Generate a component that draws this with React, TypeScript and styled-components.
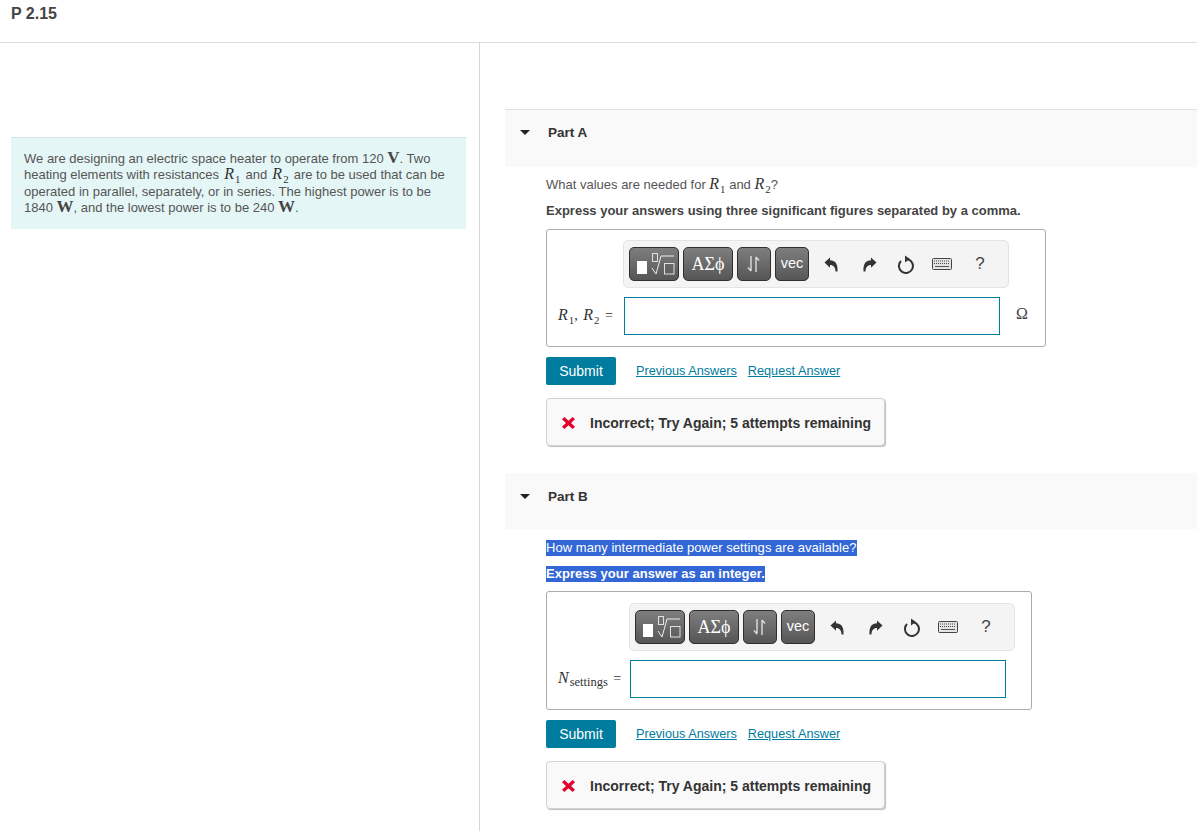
import React from 'react';
import styled, { createGlobalStyle } from 'styled-components';

const GlobalStyle = createGlobalStyle`
  html, body {
    margin: 0;
    height: 100%;
    overflow: hidden;
    background: #ffffff;
  }
  body {
    font-family: 'Liberation Sans', Arial, sans-serif;
    color: #444444;
  }
`

const MathVar = styled.span`
  font-family: 'Liberation Serif', serif;
  font-style: italic;
  font-size: 16px;
  line-height: 0;
  color: #333333;
`
const MathUnit = styled.span`
  font-family: 'Liberation Serif', serif;
  font-weight: 700;
  font-size: 17px;
  line-height: 0;
  color: #444444;
`
const MathSub = styled.sub<{ $long?: boolean }>`
  font-family: 'Liberation Serif', serif;
  font-style: normal;
  font-size: ${p => (p.$long ? '0.78em' : '0.68em')};
  line-height: 0;
  margin-left: 1px;
  vertical-align: ${p => (p.$long ? '-3px' : 'sub')};
`
const Page = styled.div`
  display: flex;
  flex-direction: column;
  height: 831px;
`
const Header = styled.header`
  height: 37px;
  border-bottom: 1px solid #dcdcdc;
  padding: 5px 11px 0;
  font-size: 16px;
  line-height: 17px;
  font-weight: 700;
  color: #444444;
`
const Columns = styled.div`
  flex: 1;
  display: flex;
  min-height: 0;
`
const LeftColumn = styled.aside`
  width: 479px;
  flex: none;
  border-right: 1px solid #d6d6d6;
  padding-top: 94px;
`
const InfoBox = styled.div`
  margin: 0 13px 0 11px;
  height: 92px;
  box-sizing: border-box;
  padding: 13px 13px 0;
  background: #e5f6f6;
  border-top: 1px solid #d3e4e6;
  font-size: 13px;
  line-height: 16.3px;
  color: #555555;
  & ${MathVar} {
    margin: 0 1.5px;
  }
`
const RightColumn = styled.main`
  flex: 1;
  padding: 66px 0 0 25px;
  min-width: 0;
`
const PartHeader = styled.div<{ $height: number; $ruled?: boolean }>`
  height: ${p => p.$height}px;
  box-sizing: border-box;
  display: flex;
  align-items: flex-start;
  background: #f9f9f9;
  border-top: 1px solid ${p => (p.$ruled ? '#e0e0e0' : '#f9f9f9')};
  padding: 15px 0 0 15px;
  font-size: 13.5px;
  line-height: 16px;
  font-weight: 700;
  color: #333333;
`
const Caret = styled.span`
  width: 0;
  height: 0;
  margin: 5px 18px 0 0;
  border-left: 5px solid transparent;
  border-right: 5px solid transparent;
  border-top: 5px solid #222222;
`
const PartBody = styled.section<{ $top: number; $bottom: number }>`
  padding: ${p => p.$top}px 0 ${p => p.$bottom}px 41px;
`
const Question = styled.p`
  margin: 0;
  height: 16px;
  font-size: 13px;
  line-height: 16px;
  color: #555555;
`
const Instruction = styled.p`
  margin: 10px 0 0;
  height: 16px;
  font-size: 13px;
  line-height: 16px;
  font-weight: 700;
  color: #444444;
`
const Selected = styled.span`
  display: inline-block;
  background: #3367d6;
  color: #ffffff;
  letter-spacing: 0.04px;
`
const AnswerBox = styled.div<{ $width: number; $top: number; $pad: number }>`
  width: ${p => p.$width}px;
  margin-top: ${p => p.$top}px;
  box-sizing: border-box;
  border: 1px solid #ababab;
  border-radius: 3px;
  padding: ${p => p.$pad}px 11px 11px;
`
const Toolbar = styled.div<{ $offset: number }>`
  width: 386px;
  height: 48px;
  box-sizing: border-box;
  margin-left: ${p => p.$offset}px;
  padding: 6px 5px;
  display: flex;
  align-items: center;
  gap: 4px;
  background: #f4f4f4;
  border: 1px solid #e4e4e4;
  border-radius: 5px;
`
const ToolButton = styled.button<{ $width: number; $serif?: boolean }>`
  width: ${p => p.$width}px;
  height: 34px;
  flex: none;
  padding: 0 0 ${p => (p.$serif ? 0 : 2)}px;
  display: flex;
  align-items: center;
  justify-content: center;
  color: #ffffff;
  background: linear-gradient(#7e7e7e, #565656);
  border: 1px solid #2f2f2f;
  border-radius: 5px;
  font-family: ${p => (p.$serif ? "'Liberation Serif', 'DejaVu Serif', serif" : "'Liberation Sans', sans-serif")};
  font-size: ${p => (p.$serif ? 18 : 14.5)}px;
`
const ToolIcons = styled.div`
  flex: 1;
  display: grid;
  grid-template-columns: 38px 38px 36px 36px 40px;
  margin-left: -1px;
`
const ToolIcon = styled.span`
  display: flex;
  align-items: center;
  justify-content: center;
  height: 34px;
  font-size: 17px;
  color: #444444;
`
const AnswerRow = styled.div<{ $label: number }>`
  display: grid;
  grid-template-columns: ${p => p.$label}px 376px auto;
  align-items: center;
  margin-top: 9px;
`
const Label = styled.span`
  font-family: 'Liberation Serif', serif;
  font-size: 14px;
  word-spacing: 2px;
  color: #333333;
  white-space: nowrap;
`
const Input = styled.input`
  height: 38px;
  width: 376px;
  box-sizing: border-box;
  padding: 0;
  background: #ffffff;
  border: 1px solid #007c9e;
  border-radius: 0;
  outline: none;
`
const Unit = styled.span`
  margin-left: 16px;
  margin-top: -5px;
  font-family: 'Liberation Serif', serif;
  font-size: 16px;
  color: #444444;
`
const ActionRow = styled.div`
  display: flex;
  align-items: center;
  margin-top: 10px;
  height: 28px;
`
const SubmitButton = styled.button`
  width: 70px;
  height: 28px;
  padding: 0;
  margin-right: 20px;
  background: #007c9e;
  color: #ffffff;
  border: none;
  border-radius: 2px;
  font-family: 'Liberation Sans', sans-serif;
  font-size: 14px;
`
const ActionLink = styled.a`
  margin: 0 11px 0 0;
  font-size: 12.7px;
  color: #007c9e;
  text-decoration: underline;
`
const Feedback = styled.div`
  width: 339px;
  height: 48px;
  margin-top: 13px;
  box-sizing: border-box;
  display: flex;
  align-items: center;
  padding: 2px 0 0 14px;
  background: #f9f9f9;
  border: 1px solid #d2d2d2;
  border-radius: 4px;
  box-shadow: 1px 1px 1px #bdbdbd;
  font-size: 14px;
  font-weight: 700;
  color: #333333;
`
const CrossIcon = styled.svg`
  width: 15px;
  height: 14px;
  margin-right: 14px;
  flex: none;
`

const Indexed = ({ name, sub }: { name: string; sub: string }) => (
  <MathVar>{name}<MathSub $long={sub.length > 1}>{sub}</MathSub></MathVar>
)

const RootIcon = () => (
  <svg width="48" height="32" viewBox="0 0 48 32" fill="none">
    <rect x="7" y="13" width="10" height="13" fill="#ffffff" />
    <rect x="22.5" y="5.5" width="5" height="8" stroke="#e0e0e0" />
    <path d="M22 20l4 6 5 -18h13" stroke="#eeeeee" />
    <rect x="34.5" y="15.5" width="9.5" height="10.5" stroke="#e0e0e0" />
  </svg>
)
const SwapIcon = () => (
  <svg width="16" height="18" viewBox="0 0 16 18" fill="none" stroke="#dddddd" strokeWidth="1.4">
    <path d="M5 1v15M2 12.5l3 3.5" />
    <path d="M10 17V2M13 5.5L10 2" />
  </svg>
)
const UndoIcon = ({ flip }: { flip?: boolean }) => (
  <svg width="15" height="15" viewBox="0 0 15 15" style={flip ? { transform: 'scaleX(-1)' } : undefined}>
    <path d="M0.5 5.5L6 0.5V3.3C11 3.3 14 6.5 13.5 14.5H11.5C11.5 10.5 9.5 8 6 8V10.8Z" fill="#333333" />
  </svg>
)
const ResetIcon = () => (
  <svg width="18" height="20" viewBox="0 0 18 20" fill="none">
    <path d="M11 5.3A7 7 0 1 1 4 7" stroke="#333333" strokeWidth="2" />
    <path d="M8 1.5L13 5 8 8.5Z" fill="#333333" />
  </svg>
)
const KeyboardIcon = () => (
  <svg width="20" height="12" viewBox="0 0 20 12" fill="none">
    <rect x="0.5" y="0.5" width="19" height="11" rx="1" fill="#e4e4e4" stroke="#444444" />
    <path d="M2 3h16M2 5.5h16" stroke="#444444" strokeDasharray="1 1" />
    <path d="M3 8.5h14" stroke="#555555" />
  </svg>
)

const AnswerPanel = ({ width, label, offset, top, pad, unit, children }: {
  width: number; label: number; offset: number; top: number; pad: number; unit?: string; children: React.ReactNode;
}) => (
  <AnswerBox $width={width} $top={top} $pad={pad}>
    <Toolbar $offset={offset}>
      <ToolButton $width={50} $serif><RootIcon /></ToolButton>
      <ToolButton $width={50} $serif>ΑΣϕ</ToolButton>
      <ToolButton $width={34} $serif><SwapIcon /></ToolButton>
      <ToolButton $width={34}>vec</ToolButton>
      <ToolIcons>
        <ToolIcon><UndoIcon /></ToolIcon>
        <ToolIcon><UndoIcon flip /></ToolIcon>
        <ToolIcon><ResetIcon /></ToolIcon>
        <ToolIcon><KeyboardIcon /></ToolIcon>
        <ToolIcon>?</ToolIcon>
      </ToolIcons>
    </Toolbar>
    <AnswerRow $label={label}>
      <Label>{children}</Label>
      <Input />
      {unit && <Unit>{unit}</Unit>}
    </AnswerRow>
  </AnswerBox>
)

const Actions = () => (
  <>
    <ActionRow>
      <SubmitButton>Submit</SubmitButton>
      <ActionLink href="#">Previous Answers</ActionLink>
      <ActionLink href="#">Request Answer</ActionLink>
    </ActionRow>
    <Feedback>
      <CrossIcon viewBox="0 0 15 14">
        <path d="M1 3.2L3.4 1 7.5 4.8 11.6 1 14 3.2 10 7l4 3.8L11.6 13 7.5 9.2 3.4 13 1 10.8 5 7Z" fill="#e2002b" />
      </CrossIcon>
      Incorrect; Try Again; 5 attempts remaining
    </Feedback>
  </>
)

export default function App() {
  return (
    <Page>
      <GlobalStyle />
      <Header>P 2.15</Header>
      <Columns>
        <LeftColumn>
          <InfoBox>
            We are designing an electric space heater to operate from 120 <MathUnit>V</MathUnit>. Two
            heating elements with resistances <Indexed name="R" sub="1" /> and <Indexed name="R" sub="2" /> are to be used that can be
            operated in parallel, separately, or in series. The highest power is to be
            1840 <MathUnit>W</MathUnit>, and the lowest power is to be 240 <MathUnit>W</MathUnit>.
          </InfoBox>
        </LeftColumn>
        <RightColumn>
          <PartHeader $height={58} $ruled><Caret />Part A</PartHeader>
          <PartBody $top={10} $bottom={27}>
            <Question>What values are needed for <Indexed name="R" sub="1" /> and <Indexed name="R" sub="2" />?</Question>
            <Instruction>Express your answers using three significant figures separated by a comma.</Instruction>
            <AnswerPanel width={500} label={66} offset={65} top={10} pad={10} unit="Ω">
              <Indexed name="R" sub="1" />, <Indexed name="R" sub="2" /> =
            </AnswerPanel>
            <Actions />
          </PartBody>
          <PartHeader $height={56}><Caret />Part B</PartHeader>
          <PartBody $top={11} $bottom={0}>
            <Question><Selected>How many intermediate power settings are available?</Selected></Question>
            <Instruction><Selected>Express your answer as an integer.</Selected></Instruction>
            <AnswerPanel width={486} label={72} offset={71} top={9} pad={11}>
              <Indexed name="N" sub="settings" /> =
            </AnswerPanel>
            <Actions />
          </PartBody>
        </RightColumn>
      </Columns>
    </Page>
  );
}
